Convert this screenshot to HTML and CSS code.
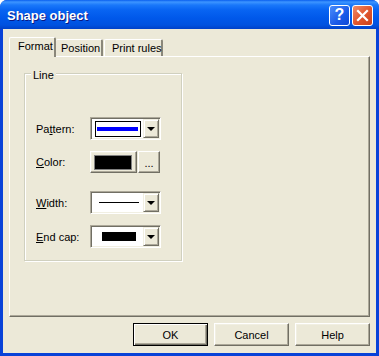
FILE: index.html
```html
<!DOCTYPE html>
<html lang="en">
<head>
    <meta charset="UTF-8">
    <title>Shape object</title>
    <link rel="stylesheet" href="styles.css">
</head>
<body>
    <div class="window">
        <div class="titlebar">
            <span class="title">Shape object</span>
            <div class="caption-buttons">
                <button class="cap cap-help">?</button>
                <button class="cap cap-close">
                    <svg width="13" height="13" viewBox="0 0 13 13">
                        <path d="M2 2 L11 11 M11 2 L2 11" stroke="#fff" stroke-width="2.2" stroke-linecap="square"/>
                    </svg>
                </button>
            </div>
        </div>
        <div class="client">
            <div class="tabs">
                <div class="tab tab-format active">Format</div>
                <div class="tab tab-position">Position</div>
                <div class="tab tab-print">Print rules</div>
            </div>
            <div class="panel">
                <div class="group">
                    <span class="legend">Line</span>

                    <div class="row row-pattern">
                        <span class="label">Pa<u>t</u>tern:</span>
                        <div class="combo">
                            <div class="field">
                                <div class="pattern-box"><div class="pattern-bar"></div></div>
                            </div>
                            <div class="drop"><span class="arrow"></span></div>
                        </div>
                    </div>

                    <div class="row row-color">
                        <span class="label"><u>C</u>olor:</span>
                        <div class="swatch-btn"><div class="swatch"></div></div>
                        <div class="dots-btn">...</div>
                    </div>

                    <div class="row row-width">
                        <span class="label"><u>W</u>idth:</span>
                        <div class="combo">
                            <div class="field">
                                <div class="width-line"></div>
                            </div>
                            <div class="drop"><span class="arrow"></span></div>
                        </div>
                    </div>

                    <div class="row row-cap">
                        <span class="label"><u>E</u>nd cap:</span>
                        <div class="combo">
                            <div class="field">
                                <div class="cap-block"></div>
                            </div>
                            <div class="drop"><span class="arrow"></span></div>
                        </div>
                    </div>
                </div>
            </div>
            <div class="actions">
                <button class="btn default">OK</button>
                <button class="btn">Cancel</button>
                <button class="btn">Help</button>
            </div>
        </div>
    </div>
</body>
</html>
```

FILE: styles.css
```css
body {
    margin: 0;
    background: #ffffff;
    font-family: "Liberation Sans", Arial, sans-serif;
    font-size: 11px;
    color: #000;
}
.window {
    width: 379px;
    height: 356px;
    display: flex;
    flex-direction: column;
    background: #0842d8;
    border-radius: 7px 7px 0 0;
    box-sizing: border-box;
    overflow: hidden;
}
.titlebar {
    height: 29px;
    flex: none;
    display: flex;
    align-items: center;
    justify-content: space-between;
    padding: 0 6px 0 7px;
    background: linear-gradient(#0a5fee 0, #3d95ff 2px, #1a78fa 5px, #0864f2 10px, #0058ea 18px, #0052e0 25px, #0041c8 29px);
}
.title {
    color: #fff;
    font-weight: bold;
    font-size: 13px;
    text-shadow: 1px 1px 0 #0a1883;
    margin-top: 1px;
}
.caption-buttons {
    display: flex;
    gap: 2px;
    margin-top: 1px;
}
.cap {
    width: 21px;
    height: 21px;
    padding: 0;
    border: 1px solid #fff;
    border-radius: 3px;
    display: flex;
    align-items: center;
    justify-content: center;
    box-sizing: border-box;
}
.cap-help {
    background: linear-gradient(135deg, #4b8dfb, #1a5ae8 60%, #0e48d6);
    color: #fff;
    font-family: "Liberation Sans", Arial, sans-serif;
    font-weight: bold;
    font-size: 16px;
    line-height: 1;
}
.cap-close {
    background: linear-gradient(135deg, #f08c6a, #e2582f 50%, #c9401b);
}
.client {
    flex: 1;
    margin: 0 3px 3px;
    background: #ece9d8;
    padding: 8px 6px 0;
    display: flex;
    flex-direction: column;
}
.tabs {
    height: 19px;
    display: flex;
    align-items: flex-end;
    position: relative;
    z-index: 1;
}
.tab {
    height: 17px;
    box-sizing: border-box;
    border-top: 1px solid #fff;
    border-left: 1px solid #fff;
    border-right: 2px solid #8a877a;
    border-radius: 2px 2px 0 0;
    line-height: 16px;
    white-space: nowrap;
}
.tab.active {
    height: 20px;
    margin-bottom: -1px;
    background: #ece9d8;
    line-height: 17px;
}
.tab-format { width: 47px; padding-left: 8px; }
.tab-position { width: 47px; padding-left: 5px; border-left: none; }
.tab-print { width: 59px; padding-left: 7px; margin-left: 1px; }
.panel {
    height: 261px;
    box-sizing: border-box;
    border-top: 1px solid #fff;
    border-left: 1px solid #fff;
    border-right: 1px solid #716f64;
    border-bottom: 1px solid #716f64;
    box-shadow: inset -1px -1px 0 #aca899;
    padding: 16px 0 0 14px;
}
.group {
    position: relative;
    width: 158px;
    height: 188px;
    box-sizing: border-box;
    border: 1px solid #d0d0bf;
    box-shadow: inset 1px 1px 0 #fff, 1px 1px 0 #fff;
    padding: 43px 0 0 11px;
}
.legend {
    position: absolute;
    top: -5px;
    left: 6px;
    padding: 0 2px;
    background: #ece9d8;
    line-height: 13px;
}
.row {
    display: flex;
    align-items: center;
    height: 23px;
}
.row-color { height: 22px; margin-top: 11px; }
.row-width { margin-top: 18px; }
.row-cap { margin-top: 11px; }
.label {
    width: 54px;
    flex: none;
}
.combo {
    width: 71px;
    height: 23px;
    box-sizing: border-box;
    border: 1px solid;
    border-color: #aca899 #fff #fff #aca899;
    box-shadow: inset 1px 1px 0 #716f64, inset -1px -1px 0 #f1efe2;
    padding: 1px;
    display: flex;
    background: #fff;
}
.field {
    flex: 1;
    display: flex;
    align-items: center;
    justify-content: center;
}
.drop {
    width: 16px;
    box-sizing: border-box;
    background: #ece9d8;
    border: 1px solid;
    border-color: #f1efe2 #716f64 #716f64 #f1efe2;
    box-shadow: inset 1px 1px 0 #fff, inset -1px -1px 0 #aca899;
    display: flex;
    align-items: center;
    justify-content: center;
}
.arrow {
    width: 0;
    height: 0;
    border-left: 4px solid transparent;
    border-right: 4px solid transparent;
    border-top: 4px solid #000;
    margin-top: 1px;
}
.pattern-box {
    width: 46px;
    height: 16px;
    box-sizing: border-box;
    border: 1px solid #000;
    display: flex;
    align-items: center;
    justify-content: center;
}
.pattern-bar {
    width: 41px;
    height: 4px;
    background: #0000ff;
}
.width-line {
    width: 40px;
    height: 1px;
    background: #000;
    margin-left: 2px;
}
.cap-block {
    width: 34px;
    height: 9px;
    background: #000;
    margin-left: 2px;
}
.swatch-btn {
    width: 47px;
    height: 22px;
    box-sizing: border-box;
    background: #ece9d8;
    border: 1px solid;
    border-color: #fff #716f64 #716f64 #fff;
    box-shadow: inset -1px -1px 0 #aca899, inset 1px 1px 0 #f1efe2;
    display: flex;
    align-items: center;
    padding-left: 3px;
}
.swatch {
    width: 38px;
    height: 15px;
    box-sizing: border-box;
    background: #000;
    border: 1px solid #808080;
}
.dots-btn {
    width: 22px;
    height: 22px;
    margin-left: 1px;
    box-sizing: border-box;
    background: #ece9d8;
    border: 1px solid;
    border-color: #fff #716f64 #716f64 #fff;
    box-shadow: inset -1px -1px 0 #aca899;
    text-align: center;
    line-height: 22px;
    font-size: 11px;
}
.actions {
    display: flex;
    justify-content: flex-end;
    gap: 6px;
    margin-top: 6px;
}
.btn {
    width: 75px;
    height: 23px;
    padding: 0;
    box-sizing: border-box;
    font-family: "Liberation Sans", Arial, sans-serif;
    font-size: 11px;
    color: #000;
    background: #ece9d8;
    border: 1px solid;
    border-color: #fff #716f64 #716f64 #fff;
    box-shadow: inset -1px -1px 0 #aca899, inset 1px 1px 0 #f1efe2;
}
.btn.default {
    border: 1px solid #000;
    box-shadow: inset 1px 1px 0 #fff, inset -1px -1px 0 #716f64, inset -2px -2px 0 #aca899;
}
```
